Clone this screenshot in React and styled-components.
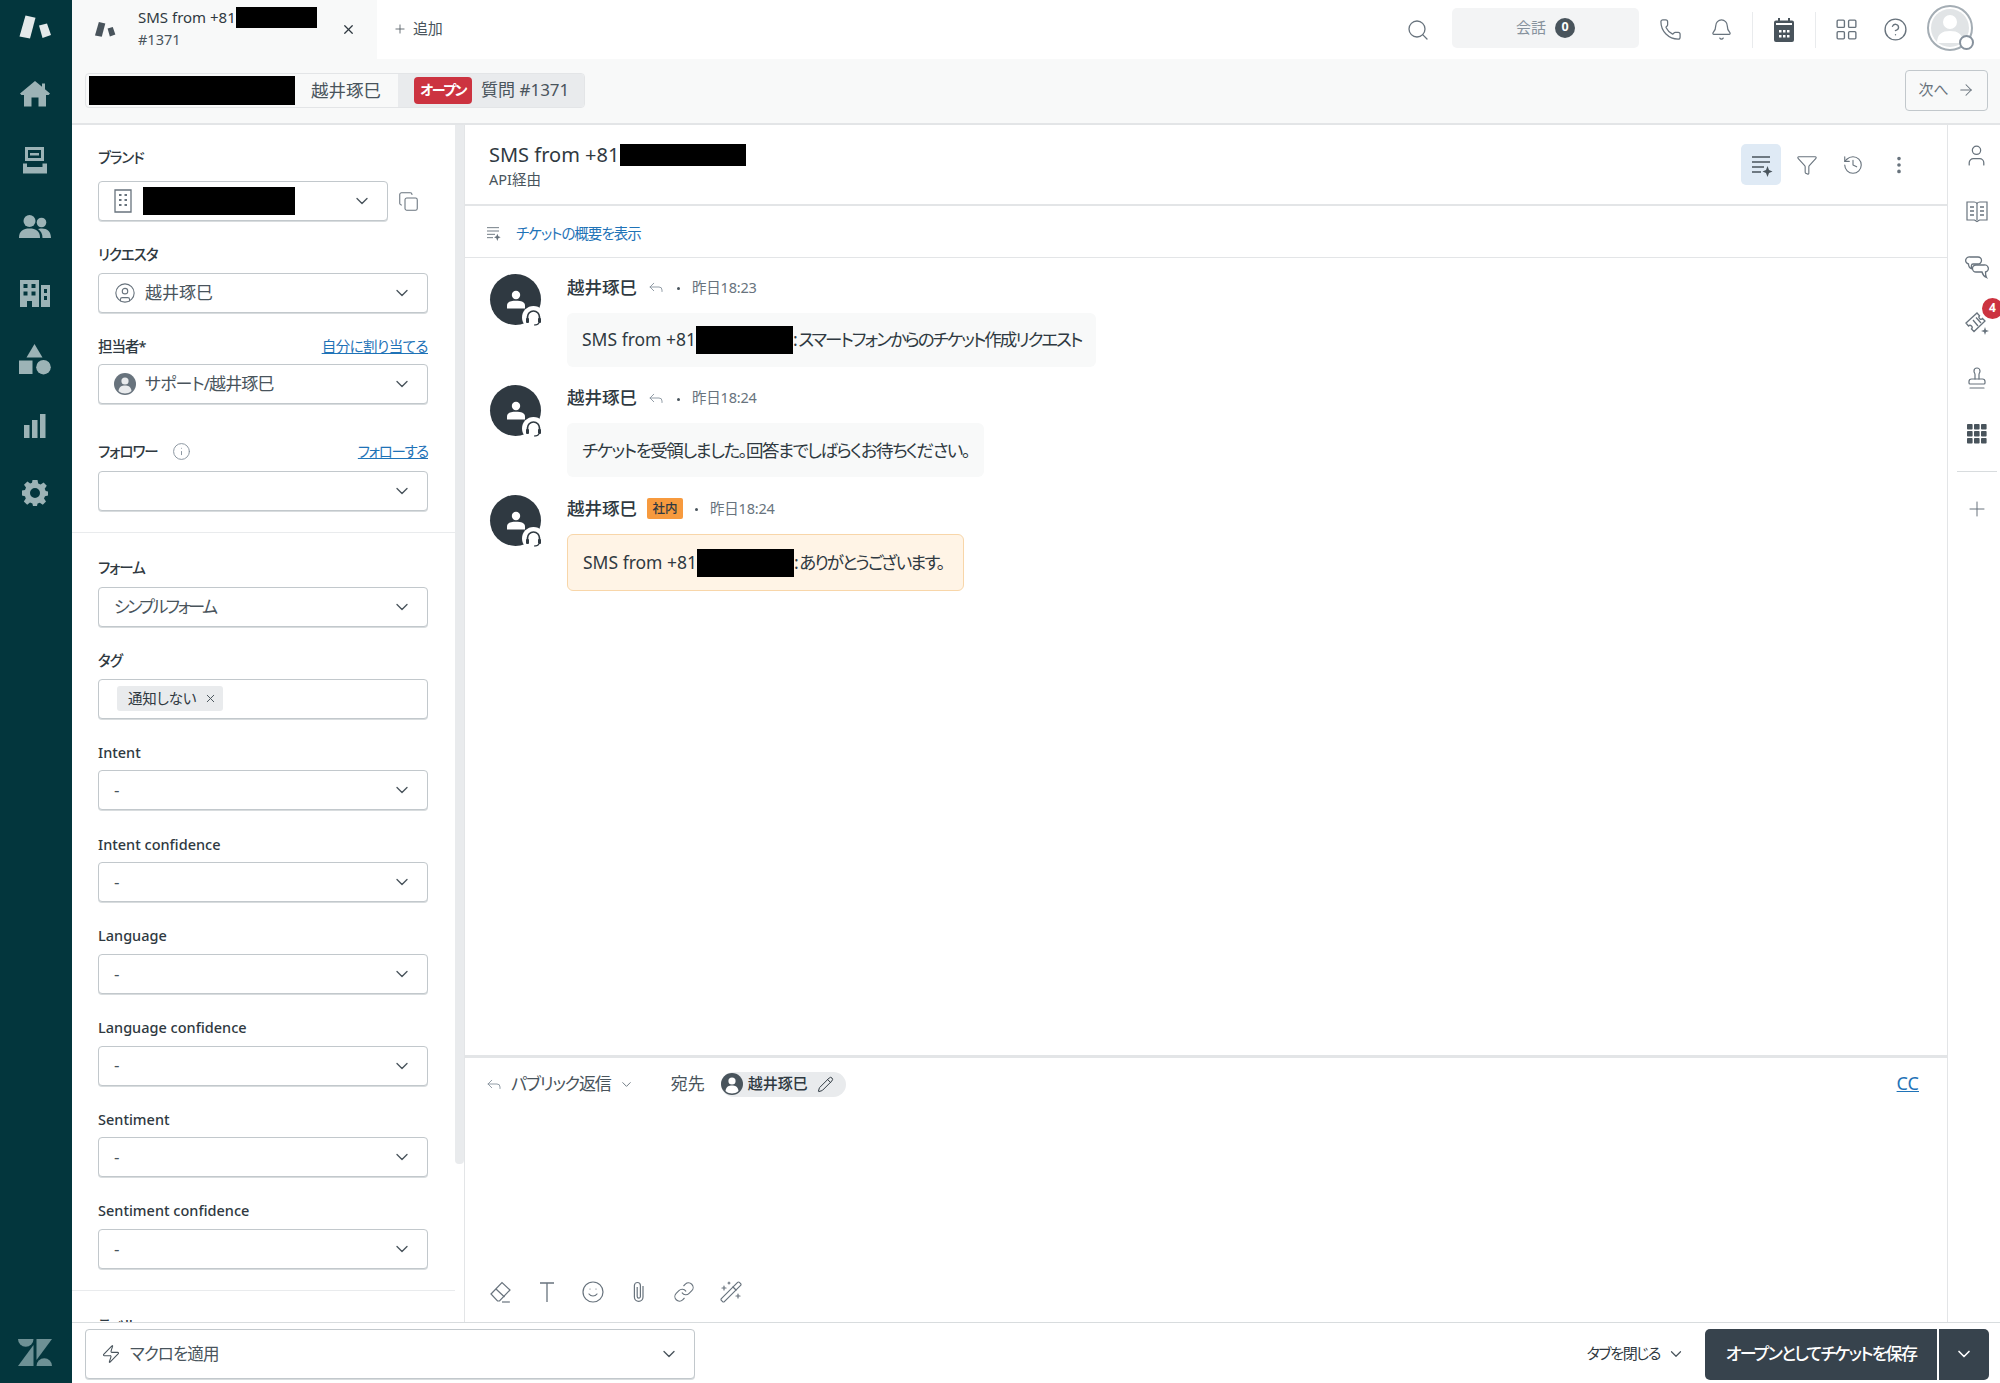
import React from "react";
import styled, { createGlobalStyle } from "styled-components";
import {
  Search, Phone, Bell, LayoutGrid, CircleHelp, ChevronDown, X, Plus, ArrowRight,
  Funnel, History, EllipsisVertical, User, Stamp,
  Link, Smile, Pencil, Reply, Zap, Copy, Info, CircleUser, WandSparkles,
} from "lucide-react";

const GlobalStyle = createGlobalStyle`
  html, body { margin: 0; padding: 0; background: #fff; }
  body {
    font-family: "Noto Sans", "Noto Sans CJK JP", sans-serif;
    font-feature-settings: "palt";
    color: #2f3941;
    line-height: 1.3;
  }
  * { box-sizing: border-box; }
`;

const grey = "#68737d";

const Page = styled.div`
  width: 2000px;
  height: 1383px;
  display: flex;
  overflow: hidden;
`;

const Nav = styled.nav`
  width: 72px;
  flex-shrink: 0;
  background: #03363d;
  padding-right: 3px;
  display: flex;
  flex-direction: column;
  align-items: center;
`;

const NavLogo = styled.div`
  height: 61px;
  display: flex;
  align-items: center;
  padding-bottom: 5px;
`;

const NavItem = styled.div`
  height: 66.4px;
  display: flex;
  align-items: center;
  justify-content: center;
`;

const NavBottom = styled.div`
  margin-top: auto;
  height: 62px;
  display: flex;
  align-items: center;
`;

const Main = styled.div`
  flex: 1;
  min-width: 0;
  display: flex;
  flex-direction: column;
`;

const TopBar = styled.header`
  height: 59px;
  flex-shrink: 0;
  display: flex;
  align-items: center;
  background: #fff;
  padding-right: 27px;
`;

const Tab = styled.div`
  width: 305px;
  height: 59px;
  background: #f8f9f9;
  display: flex;
  align-items: center;
  padding: 0 21px 0 22px;
`;

const TabText = styled.div`
  flex: 1;
  margin-left: 22px;
  font-size: 15px;
  line-height: 20px;
`;

const TabTitle = styled.div`
  display: flex;
  align-items: center;
  height: 20px;
  margin-top: -3px;
`;

const TabNumber = styled.div`
  color: #49545c;
  font-size: 14.5px;
  margin-top: 2px;
`;

const Redact = styled.span`
  display: inline-block;
  flex-shrink: 0;
  background: #000;
  width: ${p => p.$w}px;
  height: ${p => p.$h}px;
`;

const AddTab = styled.div`
  display: flex;
  align-items: center;
  gap: 6px;
  margin-left: 16px;
  margin-top: -2px;
  font-size: 15px;
  color: #49545c;
  letter-spacing: -0.2px;
`;

const Spacer = styled.div`
  flex: 1;
`;

const Slot = styled.div`
  width: ${p => p.$w}px;
  height: 46px;
  flex-shrink: 0;
  display: flex;
  align-items: center;
  justify-content: center;
`;

const Conversations = styled.div`
  width: 187px;
  height: 40px;
  margin: -4px 6px 0 12px;
  border-radius: 5px;
  background: #f3f4f5;
  display: flex;
  align-items: center;
  justify-content: center;
  gap: 9px;
  font-size: 15px;
  color: #87929d;
`;

const CountDot = styled.span`
  width: 20px;
  height: 20px;
  border-radius: 50%;
  background: #49545c;
  color: #fff;
  font-size: 12.5px;
  font-weight: 700;
  display: flex;
  align-items: center;
  justify-content: center;
`;

const TopDivider = styled.div`
  width: 1px;
  height: 36px;
  margin-left: ${p => p.$push || 0}px;
  background: #e9ebed;
  flex-shrink: 0;
`;

const Me = styled.div`
  position: relative;
  width: 46px;
  height: 46px;
  margin-left: 14px;
  margin-top: -4px;
  border-radius: 50%;
  border: 2px solid #a4adb4;
  padding: 2px;
  flex-shrink: 0;
`;

const MeFace = styled.div`
  width: 100%;
  height: 100%;
  border-radius: 50%;
  background: #e1e4e6;
  overflow: hidden;
  display: flex;
  align-items: flex-end;
  justify-content: center;
`;

const MeStatus = styled.span`
  position: absolute;
  right: -3px;
  bottom: -1px;
  width: 15px;
  height: 15px;
  border-radius: 50%;
  background: #fff;
  border: 2px solid #87929d;
`;

const SubBar = styled.div`
  height: 66px;
  flex-shrink: 0;
  background: #f8f9f9;
  border-bottom: 2px solid #e3e5e7;
  display: flex;
  align-items: center;
  justify-content: space-between;
  padding: 0 12px 2px 13px;
`;

const Crumbs = styled.div`
  display: flex;
  height: 35px;
  width: 500px;
  border: 1px solid #e3e5e7;
  border-radius: 4px;
  overflow: hidden;
`;

const CrumbUser = styled.div`
  width: 312px;
  display: flex;
  align-items: center;
  padding-left: 3px;
  gap: 16px;
  font-size: 17.5px;
  color: #49545c;
`;

const CrumbTicket = styled.div`
  flex: 1;
  background: #e9ebed;
  display: flex;
  align-items: center;
  padding-left: 16px;
  gap: 9px;
  font-size: 17px;
  color: #49545c;
`;

const StatusBadge = styled.span`
  width: 58px;
  height: 27px;
  border-radius: 4px;
  background: #cc3340;
  color: #fff;
  font-size: 14px;
  font-weight: 700;
  letter-spacing: -1.5px;
  display: flex;
  align-items: center;
  justify-content: center;
`;

const NextButton = styled.div`
  width: 83px;
  height: 41px;
  border: 1px solid #c2c8cc;
  border-radius: 4px;
  background: #f8f9f9;
  display: flex;
  align-items: center;
  justify-content: center;
  gap: 8px;
  color: ${grey};
  font-size: 15px;
`;

const Body = styled.div`
  flex: 1;
  min-height: 0;
  display: flex;
`;

const Side = styled.aside`
  width: 393px;
  flex-shrink: 0;
  display: flex;
  border-right: 1px solid #e3e5e7;
`;

const SideScroll = styled.div`
  width: 383px;
  overflow: hidden;
`;

const ScrollBar = styled.div`
  width: 9px;
  height: 1039px;
  background: #e9ebed;
  border-radius: 0 0 4px 4px;
`;

const SideSection = styled.section`
  padding: ${p => p.$top}px 27px 21px 26px;
  border-bottom: ${p => (p.$last ? "none" : "1px solid #e9ebed")};
  display: flex;
  flex-direction: column;
  gap: 23.7px;
`;

const Field = styled.div`
  margin-top: ${p => p.$push || 0}px;
`;

const LabelRow = styled.div`
  height: 20px;
  margin-bottom: ${p => p.$mb || 8}px;
  display: flex;
  align-items: center;
  justify-content: space-between;
`;

const Label = styled.label`
  display: flex;
  align-items: center;
  gap: 14px;
  font-size: 14.5px;
  font-weight: 500;
  letter-spacing: ${p => (p.$latin ? 0 : -1)}px;
  color: #2f3941;
`;

const FieldLink = styled.a`
  font-size: 14.5px;
  letter-spacing: ${p => p.$ls || -0.5}px;
  color: #1f73b7;
  text-decoration: underline;
`;

const FieldRow = styled.div`
  display: flex;
  align-items: center;
  gap: 10px;
`;

const Select = styled.div`
  width: ${p => p.$w || 330}px;
  height: ${p => p.$h || 40}px;
  flex-shrink: 0;
  border: 1px solid #c2c8cc;
  border-radius: 4px;
  box-shadow: 0 1px 0 #d8dcde;
  background: #fff;
  display: flex;
  align-items: center;
  gap: ${p => p.$gap || 9}px;
  padding: 0 15px;
  font-size: 17px;
  color: #49545c;
`;

const SelectValue = styled.span`
  flex: 1;
  display: flex;
  align-items: center;
  letter-spacing: ${p => p.$ls || 0}px;
`;

const TagInput = styled(Select)`
  padding-left: 18px;
`;

const TagChip = styled.span`
  height: 25px;
  display: flex;
  align-items: center;
  gap: 8px;
  padding: 0 6px 0 11px;
  border-radius: 3px;
  background: #e9ebed;
  font-size: 14.5px;
  letter-spacing: -0.2px;
  color: #2f3941;
`;

const Center = styled.div`
  flex: 1;
  min-width: 0;
  display: flex;
  flex-direction: column;
`;

const TicketHead = styled.div`
  height: 81px;
  flex-shrink: 0;
  border-bottom: 2px solid #e3e5e7;
  display: flex;
  align-items: center;
  justify-content: space-between;
  padding: 0 22px 0 24px;
`;

const TicketHeading = styled.div`
  padding-top: 3px;
`;

const TicketTitle = styled.div`
  display: flex;
  align-items: center;
  height: 24px;
  font-size: 20px;
  color: #2f3941;
  gap: 1px;
`;

const TicketSub = styled.div`
  margin-top: 3px;
  font-size: 14.5px;
  color: #49545c;
`;

const HeadActions = styled.div`
  display: flex;
  align-items: center;
`;

const HeadAction = styled.div`
  width: ${p => p.$w || 45}px;
  height: 41px;
  border-radius: 5px;
  background: ${p => (p.$active ? "#dfeaf5" : "transparent")};
  display: flex;
  align-items: center;
  justify-content: center;
`;

const SummaryRow = styled.div`
  height: 52px;
  flex-shrink: 0;
  border-bottom: 1px solid #e3e5e7;
  display: flex;
  align-items: center;
  gap: 15px;
  padding: 3px 0 0 20px;
  font-size: 14.5px;
  letter-spacing: -1px;
  color: #1f73b7;
`;

const Thread = styled.div`
  flex: 1;
  min-height: 0;
  padding: 16px 0 0 25px;
  display: flex;
  flex-direction: column;
  gap: 18px;
`;

const Message = styled.article`
  display: flex;
  gap: 26px;
`;

const AvatarWrap = styled.div`
  position: relative;
  width: 51px;
  height: 51px;
  flex-shrink: 0;
  border-radius: 50%;
  background: #2f3941;
  display: flex;
  align-items: center;
  justify-content: center;
`;

const HeadsetBadge = styled.span`
  position: absolute;
  right: -4px;
  bottom: -4px;
  width: 23px;
  height: 23px;
  border-radius: 50%;
  background: #fff;
  display: flex;
  align-items: center;
  justify-content: center;
`;

const MessageMeta = styled.div`
  height: 26px;
  margin-bottom: 12.7px;
  display: flex;
  align-items: center;
  font-size: 17.5px;
  font-weight: 500;
  color: #2f3941;
`;

const Dot = styled.span`
  width: 3px;
  height: 3px;
  border-radius: 50%;
  background: #49545c;
  margin: 3px 12px 0;
`;

const Time = styled.span`
  font-size: 14.5px;
  font-weight: 400;
  letter-spacing: -0.2px;
  color: ${grey};
`;

const ReplyMark = styled.span`
  display: flex;
  margin-left: 10px;
`;

const InternalBadge = styled.span`
  width: 36px;
  height: 21px;
  margin-left: 10px;
  margin-top: 1px;
  border-radius: 2px;
  background: #f79a3e;
  color: #2f3941;
  font-size: 12.5px;
  font-weight: 500;
  display: flex;
  align-items: center;
  justify-content: center;
`;

const Bubble = styled.div`
  height: ${p => (p.$note ? 57 : 54)}px;
  display: inline-flex;
  align-items: center;
  padding: 0 ${p => (p.$note ? 20 : 15)}px 0 15px;
  border-radius: 6px;
  font-size: 17.5px;
  color: #2f3941;
  background: ${p => (p.$note ? "#fff4e6" : "#f8f9f9")};
  border: ${p => (p.$note ? "1px solid #f8d6a9" : "none")};
`;

const Kana = styled.span`
  letter-spacing: ${p => p.$ls}px;
`;

const Composer = styled.div`
  height: 267px;
  flex-shrink: 0;
  border-top: 3px solid #e3e5e7;
  display: flex;
  flex-direction: column;
  justify-content: space-between;
`;

const ComposerHead = styled.div`
  height: 52px;
  display: flex;
  align-items: center;
  padding: 0 28px 0 20px;
  font-size: 17px;
  color: #49545c;
`;

const ChannelPick = styled.div`
  display: flex;
  align-items: center;
  gap: 8px;
  letter-spacing: -1.1px;
`;

const ToLabel = styled.span`
  margin: 0 16px 0 37px;
`;

const Recipient = styled.div`
  width: 125px;
  height: 25px;
  border-radius: 13px;
  background: #e9ebed;
  display: flex;
  align-items: center;
  gap: 5px;
  font-size: 15px;
  font-weight: 500;
  color: #2f3941;
`;

const RecipientEdit = styled.span`
  display: flex;
  margin-left: 4px;
`;

const CcLink = styled.a`
  margin-left: auto;
  color: #1f73b7;
  font-size: 18px;
  text-decoration: underline;
`;

const ComposerTools = styled.div`
  height: 36px;
  margin-bottom: 12px;
  display: flex;
  align-items: center;
  padding-left: 24px;
`;

const ToolSlot = styled.div`
  width: 46px;
  display: flex;
  justify-content: flex-start;
`;

const Rail = styled.aside`
  width: 53px;
  flex-shrink: 0;
  border-left: 1px solid #e3e5e7;
  padding: 3px 0 0 5px;
  overflow: hidden;
  display: flex;
  flex-direction: column;
  align-items: center;
`;

const RailItem = styled.div`
  position: relative;
  width: 100%;
  height: 55.6px;
  display: flex;
  align-items: center;
  justify-content: center;
`;

const RailBadge = styled.span`
  position: absolute;
  right: -3px;
  top: 3px;
  width: 21px;
  height: 21px;
  border-radius: 50%;
  background: #cc3340;
  color: #fff;
  font-size: 12px;
  font-weight: 700;
  display: flex;
  align-items: center;
  justify-content: center;
`;

const RailDivider = styled.div`
  width: 40px;
  height: 1px;
  margin: 9px 0 10px;
  background: #d8dcde;
`;

const Footer = styled.footer`
  height: 61px;
  flex-shrink: 0;
  border-top: 1px solid #d8dcde;
  display: flex;
  align-items: center;
  padding: 2px 11px 0 13px;
`;

const MacroSelect = styled(Select)`
  font-size: 16.5px;
`;

const CloseTab = styled.div`
  margin-left: auto;
  display: flex;
  align-items: center;
  gap: 7px;
  margin-right: 20px;
  font-size: 15px;
  letter-spacing: -1.4px;
  color: #2f3941;
`;

const SaveButton = styled.div`
  height: 51px;
  display: flex;
  align-items: center;
  justify-content: center;
  background: #37434d;
  color: #fff;
  font-size: 17px;
  font-weight: 500;
  letter-spacing: -1.7px;
  width: ${p => p.$w}px;
  border-radius: ${p => p.$r};
`;

const SaveGroup = styled.div`
  display: flex;
  gap: 2px;
`;

// icons that none of the packages has

const NavShape = styled.svg`
  fill: ${p => p.$fill || "#9cb3b6"};
`;

const Suite = ({ color = "#e4e9ea", size = 34 }) => (
  <svg width={size} height={size} viewBox="0 0 34 34" fill={color}>
    <path d="M7.5 4.5 L17.5 6.8 L12 27.5 L1.5 25.5 Z" />
    <path d="M21 14.5 L29 12.5 L33 24 L24.5 27 Z" />
  </svg>
);

const HomeIcon = () => (
  <NavShape width="30" height="26" viewBox="0 0 30 26">
    <path d="M15 0 L22 5.8 V2.5 H25 V8.3 L30 12.5 L28.6 14 H26 V25.5 H18.5 V16.5 H11.5 V25.5 H4 V14 H1.4 L0 12.5 Z" />
  </NavShape>
);

const ViewsIcon = () => (
  <NavShape width="24" height="27" viewBox="0 0 24 27">
    <path fillRule="evenodd" d="M2 0 H21 V14 H2 Z M5 3 V11 H18 V3 Z" />
    <path d="M7 6 H16 V8.5 H7 Z" />
    <path d="M0 16.5 H4 V20 H19.5 V16.5 H24 V26.5 H0 Z" />
  </NavShape>
);

const PeopleIcon = () => (
  <NavShape width="32" height="24" viewBox="0 0 32 24">
    <circle cx="10.5" cy="6" r="6" />
    <circle cx="22.5" cy="7.5" r="4.8" />
    <path d="M0 23 C0 16 4 13.5 10.5 13.5 C17 13.5 21 16 21 23 Z" />
    <path d="M19 14 C21 13.4 22 13.4 23 13.4 C28 13.4 32 16 32 23 H23.5 C23.5 19 22 16 19 14 Z" />
  </NavShape>
);

const OrgIcon = () => (
  <NavShape width="30" height="27" viewBox="0 0 30 27">
    <path fillRule="evenodd" d="M0 0 H19 V27 H12 V21 H7 V27 H0 Z M3.5 4 V8 H7.5 V4 Z M11.5 4 V8 H15.5 V4 Z M3.5 11.5 V15.5 H7.5 V11.5 Z M11.5 11.5 V15.5 H15.5 V11.5 Z" />
    <path fillRule="evenodd" d="M21 5 H30 V27 H21 Z M24 9 V13 H27 V9 Z M24 16 V20 H27 V16 Z" />
  </NavShape>
);

const ShapesIcon = () => (
  <NavShape width="32" height="31" viewBox="0 0 32 31">
    <path d="M15.5 0 L23.5 13.5 H7.5 Z" />
    <rect x="0" y="16.5" width="13.5" height="13.5" />
    <circle cx="24.5" cy="23.2" r="7.3" />
  </NavShape>
);

const ChartIcon = () => (
  <NavShape width="22" height="24" viewBox="0 0 22 24">
    <rect x="0" y="11" width="5.5" height="13" />
    <rect x="8" y="6" width="5.5" height="18" />
    <rect x="16" y="0" width="5.5" height="24" />
  </NavShape>
);

const GearIcon = () => (
  <NavShape width="26" height="26" viewBox="0 0 26 26">
    <path fillRule="evenodd" d="M10.5 0 H15.5 L16.2 3.6 L18.6 4.6 L21.6 2.5 L24.8 5.8 L22.7 8.8 L23.7 11 L26 11.4 V15.6 L23 16.2 L22 18.6 L24 21.6 L20.8 24.8 L17.8 22.8 L15.6 23.6 L15 26 H11 L10.4 23.4 L8 22.6 L5.2 24.8 L1.8 21.4 L3.8 18.6 L3 16.2 L0 15.6 V10.6 L3 10 L4 7.6 L2 4.8 L5.4 1.6 L8.2 3.6 L10 2.8 Z M13 8 A5 5 0 1 0 13 18 A5 5 0 1 0 13 8 Z" />
  </NavShape>
);

const ZLogo = () => (
  <NavShape $fill="#6e9195" width="34" height="27" viewBox="0 0 34 27">
    <path d="M0 0 H15.5 A7.75 7.75 0 0 1 0 0 Z" />
    <path d="M15.5 6 V27 H0 Z" />
    <path d="M18.5 0 H34 L18.5 21 Z" />
    <path d="M18.5 27 A7.75 7.75 0 0 1 34 27 Z" />
  </NavShape>
);

const CalendarIcon = () => (
  <svg width="20" height="24" viewBox="0 0 20 24" fill="#49545c">
    <path fillRule="evenodd" d="M4 0 H6 V2.5 H14 V0 H16 V2.5 H18 A2 2 0 0 1 20 4.5 V22 A2 2 0 0 1 18 24 H2 A2 2 0 0 1 0 22 V4.5 A2 2 0 0 1 2 2.5 H4 Z M2 5 V7 H18 V5 Z M5 12 V14.5 H7.5 V12 Z M9 12 V14.5 H11.5 V12 Z M13 12 V14.5 H15.5 V12 Z M5 17 V19.5 H7.5 V17 Z M9 17 V19.5 H11.5 V17 Z M13 17 V19.5 H15.5 V17 Z" />
  </svg>
);

const MeGlyph = () => (
  <svg width="38" height="38" viewBox="0 0 38 38" fill="#fff">
    <circle cx="19" cy="13" r="7" />
    <path d="M6 34 C6 25 11 22 19 22 C27 22 32 25 32 34 Z" />
  </svg>
);

const SummaryIcon = ({ size = 24, color = "#49545c" }) => (
  <svg width={size} height={size} viewBox="0 0 24 24" fill="none" stroke={color} strokeWidth="1.4">
    <path d="M3 4 H21 M3 9 H21 M3 14 H15 M3 19 H12" />
    <path d="M18.5 13 L20 17 L23.5 18.5 L20 20 L18.5 24 L17 20 L13.5 18.5 L17 17 Z" fill={color} stroke="none" />
  </svg>
);

const BookIcon = () => (
  <svg width="22" height="24" viewBox="0 0 22 24" fill="none" stroke={grey} strokeWidth="1.2">
    <path d="M1 3 H8 C9.5 3 11 4 11 5 C11 4 12.5 3 14 3 H21 V21 H13.5 L11 22.5 L8.5 21 H1 Z M11 5 V21" />
    <path d="M4 8 H8 M4 12 H8 M4 16 H8 M14 8 H18 M14 12 H18 M14 16 H18" strokeWidth="1.6" />
  </svg>
);

const ChatsIcon = () => (
  <svg width="24" height="24" viewBox="0 0 24 24" fill="none" stroke={grey} strokeWidth="1.3">
    <path d="M5 2 H13 A3.5 3.5 0 0 1 13 9 H8 C6 9 6 12 7 14 C4.5 13 3.5 11 3.5 9 A3.5 3.5 0 0 1 5 2 Z" />
    <path d="M11 10 H19 A3.5 3.5 0 0 1 20.5 17 C20.5 19 20.5 21 21.5 22.5 C19 21.5 17.5 19 17 17 H11 A3.5 3.5 0 0 1 11 10 Z" fill="#fff" />
  </svg>
);

const TicketSparkIcon = () => (
  <svg width="26" height="26" viewBox="0 0 26 26" fill="none" stroke={grey} strokeWidth="1.3">
    <path d="M2 13 L13 3 L15.5 5.8 A2 2 0 0 0 18.5 8.5 L21 11 L10 21.5 L7.5 19 A2 2 0 0 0 4.5 16 Z" />
    <path d="M9 10 L14 16 M12 7.5 L17 13" />
    <path d="M21 17 L22 20 L25 21 L22 22 L21 25 L20 22 L17 21 L20 20 Z" fill={grey} stroke="none" />
  </svg>
);

const AppsIcon = () => (
  <svg width="20" height="20" viewBox="0 0 20 20" fill="#49545c">
    {[0, 7, 14].map(y => [0, 7, 14].map(x => (
      <rect key={`${x}-${y}`} x={x} y={y} width="5.6" height="5.6" rx="0.8" />
    )))}
  </svg>
);

const BuildingOutline = () => (
  <svg width="18" height="24" viewBox="0 0 18 24" fill="none" stroke={grey} strokeWidth="1.3">
    <path d="M1 1 H17 V23 H1 Z" />
    <path d="M5 6 H7.5 M10.5 6 H13 M5 11 H7.5 M10.5 11 H13 M5 16 H7.5 M10.5 16 H13" strokeWidth="2" />
  </svg>
);

const AgentGlyph = ({ size = 22, color = "#49545c", fg = "#fff" }) => (
  <svg width={size} height={size} viewBox="0 0 22 22">
    <circle cx="11" cy="11" r="11" fill={color} />
    <circle cx="11" cy="8" r="3.6" fill={fg} />
    <path d="M4.5 18 C5 13.5 8 12.6 11 12.6 C14 12.6 17 13.5 17.5 18 C15.5 19.8 13 20.5 11 20.5 C9 20.5 6.5 19.8 4.5 18 Z" fill={fg} />
  </svg>
);

const PersonGlyph = () => (
  <svg width="18" height="21" viewBox="0 0 24 26" fill="#fff">
    <circle cx="12" cy="7" r="5.6" />
    <path d="M0 25 V21 C0 16 5 14.5 12 14.5 C19 14.5 24 16 24 21 V25 Z" />
  </svg>
);

const HeadsetGlyph = () => (
  <svg width="17" height="17" viewBox="0 0 17 17" fill="none" stroke="#2f3941" strokeWidth="1.7">
    <path d="M2.5 10 V8 A6 6 0 0 1 14.5 8 V10" />
    <rect x="1" y="9" width="3" height="5" rx="1" fill="#2f3941" stroke="none" />
    <rect x="13" y="9" width="3" height="5" rx="1" fill="#2f3941" stroke="none" />
    <path d="M14 14 C13 16 11 16 9 16" strokeWidth="1.2" />
  </svg>
);

const EraserIcon = () => (
  <svg width="24" height="24" viewBox="0 0 24 24" fill="none" stroke={grey} strokeWidth="1.2">
    <path d="M2 14 L13 2.5 L21 10 L10.5 21 L8.5 21 Z" />
    <path d="M7 9 L15.5 17" />
    <path d="M13 22 H21" />
  </svg>
);

const TextIcon = () => (
  <svg width="24" height="24" viewBox="0 0 24 24" fill="none" stroke={grey} strokeWidth="1.3">
    <path d="M5 3 H19 M12 3 V22" />
  </svg>
);

const ClipIcon = () => (
  <svg width="24" height="24" viewBox="0 0 24 24" fill="none" stroke={grey} strokeWidth="1.2">
    <path d="M16 6 V17 A4.3 4.3 0 0 1 7.4 17 V5.5 A3 3 0 0 1 13.4 5.5 V16.5 A1.6 1.6 0 0 1 10.2 16.5 V7" />
  </svg>
);

const Chevron = ({ size = 20, color = "#49545c" }) => (
  <ChevronDown size={size} strokeWidth={1.6} color={color} />
);

const Avatar = () => (
  <AvatarWrap>
    <PersonGlyph />
    <HeadsetBadge><HeadsetGlyph /></HeadsetBadge>
  </AvatarWrap>
);

const MessageHead = ({ children, time }) => (
  <MessageMeta>
    越井琢巳
    {children}
    <Dot />
    <Time>{time}</Time>
  </MessageMeta>
);

const ReplyIcon = () => (
  <ReplyMark><Reply size={18} strokeWidth={1.2} color="#87929d" /></ReplyMark>
);

const otherFields = [
  "Intent",
  "Intent confidence",
  "Language",
  "Language confidence",
  "Sentiment",
  "Sentiment confidence",
];

export default function App() {
  return (
    <Page>
      <GlobalStyle />
      <Nav>
        <NavLogo><Suite /></NavLogo>
        <NavItem><HomeIcon /></NavItem>
        <NavItem><ViewsIcon /></NavItem>
        <NavItem><PeopleIcon /></NavItem>
        <NavItem><OrgIcon /></NavItem>
        <NavItem><ShapesIcon /></NavItem>
        <NavItem><ChartIcon /></NavItem>
        <NavItem><GearIcon /></NavItem>
        <NavBottom><ZLogo /></NavBottom>
      </Nav>
      <Main>
        <TopBar>
          <Tab>
            <Suite color="#49545c" size={22} />
            <TabText>
              <TabTitle>SMS from +81<Redact $w={81} $h={21} /></TabTitle>
              <TabNumber>#1371</TabNumber>
            </TabText>
            <X size={15} strokeWidth={2} color="#2f3941" />
          </Tab>
          <AddTab><Plus size={14} strokeWidth={1.4} />追加</AddTab>
          <Spacer />
          <Slot $w={44}><Search size={24} strokeWidth={1.3} color={grey} /></Slot>
          <Conversations>会話<CountDot>0</CountDot></Conversations>
          <Slot $w={51}><Phone size={23} strokeWidth={1.3} color={grey} /></Slot>
          <Slot $w={50}><Bell size={23} strokeWidth={1.3} color={grey} /></Slot>
          <TopDivider $push={6} />
          <Slot $w={62}><CalendarIcon /></Slot>
          <TopDivider />
          <Slot $w={61}><LayoutGrid size={25} strokeWidth={1.3} color={grey} /></Slot>
          <Slot $w={36}><CircleHelp size={25} strokeWidth={1.3} color={grey} /></Slot>
          <Me>
            <MeFace><MeGlyph /></MeFace>
            <MeStatus />
          </Me>
        </TopBar>
        <SubBar>
          <Crumbs>
            <CrumbUser><Redact $w={206} $h={29} />越井琢巳</CrumbUser>
            <CrumbTicket><StatusBadge>オープン</StatusBadge>質問 #1371</CrumbTicket>
          </Crumbs>
          <NextButton>次へ<ArrowRight size={18} strokeWidth={1.4} /></NextButton>
        </SubBar>
        <Body>
          <Side>
            <SideScroll>
              <SideSection $top={22}>
                <Field>
                  <LabelRow $mb={14}><Label>ブランド</Label></LabelRow>
                  <FieldRow>
                    <Select $w={290} $gap={11}>
                      <BuildingOutline />
                      <SelectValue><Redact $w={152} $h={28} /></SelectValue>
                      <Chevron />
                    </Select>
                    <Copy size={21} strokeWidth={1.2} color={grey} />
                  </FieldRow>
                </Field>
                <Field>
                  <LabelRow><Label>リクエスタ</Label></LabelRow>
                  <Select>
                    <CircleUser size={22} strokeWidth={1.2} color={grey} />
                    <SelectValue>越井琢巳</SelectValue>
                    <Chevron />
                  </Select>
                </Field>
                <Field>
                  <LabelRow>
                    <Label>担当者*</Label>
                    <FieldLink>自分に割り当てる</FieldLink>
                  </LabelRow>
                  <Select>
                    <AgentGlyph color="#68737d" fg="#e9ebed" />
                    <SelectValue $ls={-0.9}>サポート/越井琢巳</SelectValue>
                    <Chevron />
                  </Select>
                </Field>
                <Field $push={13}>
                  <LabelRow $mb={10}>
                    <Label>フォロワー<Info size={19} strokeWidth={1.2} color="#87929d" /></Label>
                    <FieldLink $ls={-1.3}>フォローする</FieldLink>
                  </LabelRow>
                  <Select>
                    <SelectValue />
                    <Chevron />
                  </Select>
                </Field>
              </SideSection>
              <SideSection $top={24}>
                <Field>
                  <LabelRow $mb={10}><Label>フォーム</Label></LabelRow>
                  <Select>
                    <SelectValue $ls={-2.5}>シンプルフォーム</SelectValue>
                    <Chevron />
                  </Select>
                </Field>
                <Field>
                  <LabelRow><Label>タグ</Label></LabelRow>
                  <TagInput>
                    <TagChip>通知しない<X size={13} strokeWidth={1.8} color="#49545c" /></TagChip>
                  </TagInput>
                </Field>
                {otherFields.map(name => (
                  <Field key={name}>
                    <LabelRow><Label $latin>{name}</Label></LabelRow>
                    <Select>
                      <SelectValue>-</SelectValue>
                      <Chevron />
                    </Select>
                  </Field>
                ))}
              </SideSection>
              <SideSection $top={25} $last>
                <Field>
                  <LabelRow><Label>ラベル</Label></LabelRow>
                </Field>
              </SideSection>
            </SideScroll>
            <ScrollBar />
          </Side>
          <Center>
            <TicketHead>
              <TicketHeading>
                <TicketTitle>SMS from +81<Redact $w={126} $h={22} /></TicketTitle>
                <TicketSub>API経由</TicketSub>
              </TicketHeading>
              <HeadActions>
                <HeadAction $active $w={40}><SummaryIcon /></HeadAction>
                <HeadAction $w={52}><Funnel size={22} strokeWidth={1.2} color={grey} /></HeadAction>
                <HeadAction $w={40}><History size={22} strokeWidth={1.2} color={grey} /></HeadAction>
                <HeadAction $w={52}><EllipsisVertical size={22} strokeWidth={2} color={grey} /></HeadAction>
              </HeadActions>
            </TicketHead>
            <SummaryRow>
              <SummaryIcon size={16} color={grey} />
              チケットの概要を表示
            </SummaryRow>
            <Thread>
              <Message>
                <Avatar />
                <div>
                  <MessageHead time="昨日18:23"><ReplyIcon /></MessageHead>
                  <Bubble>SMS from +81<Redact $w={97} $h={28} /><Kana $ls={-2}>: スマートフォンからのチケット作成リクエスト</Kana></Bubble>
                </div>
              </Message>
              <Message>
                <Avatar />
                <div>
                  <MessageHead time="昨日18:24"><ReplyIcon /></MessageHead>
                  <Bubble><Kana $ls={-1.5}>チケットを受領しました。回答までしばらくお待ちください。</Kana></Bubble>
                </div>
              </Message>
              <Message>
                <Avatar />
                <div>
                  <MessageHead time="昨日18:24"><InternalBadge>社内</InternalBadge></MessageHead>
                  <Bubble $note>SMS from +81<Redact $w={97} $h={28} /><Kana $ls={-2}>: ありがとうございます。</Kana></Bubble>
                </div>
              </Message>
            </Thread>
            <Composer>
              <ComposerHead>
                <ChannelPick>
                  <Reply size={18} strokeWidth={1.2} color="#87929d" />
                  パブリック返信
                  <ChevronDown size={15} strokeWidth={1.5} color={grey} />
                </ChannelPick>
                <ToLabel>宛先</ToLabel>
                <Recipient>
                  <AgentGlyph />
                  越井琢巳
                  <RecipientEdit><Pencil size={17} strokeWidth={1.4} color="#2f3941" /></RecipientEdit>
                </Recipient>
                <CcLink>CC</CcLink>
              </ComposerHead>
              <ComposerTools>
                <ToolSlot><EraserIcon /></ToolSlot>
                <ToolSlot><TextIcon /></ToolSlot>
                <ToolSlot><Smile size={24} strokeWidth={1.2} color={grey} /></ToolSlot>
                <ToolSlot><ClipIcon /></ToolSlot>
                <ToolSlot><Link size={22} strokeWidth={1.2} color={grey} /></ToolSlot>
                <ToolSlot><WandSparkles size={24} strokeWidth={1.2} color={grey} /></ToolSlot>
              </ComposerTools>
            </Composer>
          </Center>
          <Rail>
            <RailItem><User size={25} strokeWidth={1.2} color={grey} /></RailItem>
            <RailItem><BookIcon /></RailItem>
            <RailItem><ChatsIcon /></RailItem>
            <RailItem><TicketSparkIcon /><RailBadge>4</RailBadge></RailItem>
            <RailItem><Stamp size={24} strokeWidth={1.2} color={grey} /></RailItem>
            <RailItem><AppsIcon /></RailItem>
            <RailDivider />
            <RailItem><Plus size={24} strokeWidth={1} color={grey} /></RailItem>
          </Rail>
        </Body>
        <Footer>
          <MacroSelect $w={610} $h={50}>
            <Zap size={20} strokeWidth={1.3} color="#49545c" />
            <SelectValue $ls={-0.9}>マクロを適用</SelectValue>
            <Chevron />
          </MacroSelect>
          <CloseTab>タブを閉じる<Chevron size={18} /></CloseTab>
          <SaveGroup>
            <SaveButton $w={232} $r="5px 0 0 5px">オープンとしてチケットを保存</SaveButton>
            <SaveButton $w={50} $r="0 5px 5px 0"><ChevronDown size={20} strokeWidth={2} /></SaveButton>
          </SaveGroup>
        </Footer>
      </Main>
    </Page>
  );
}
